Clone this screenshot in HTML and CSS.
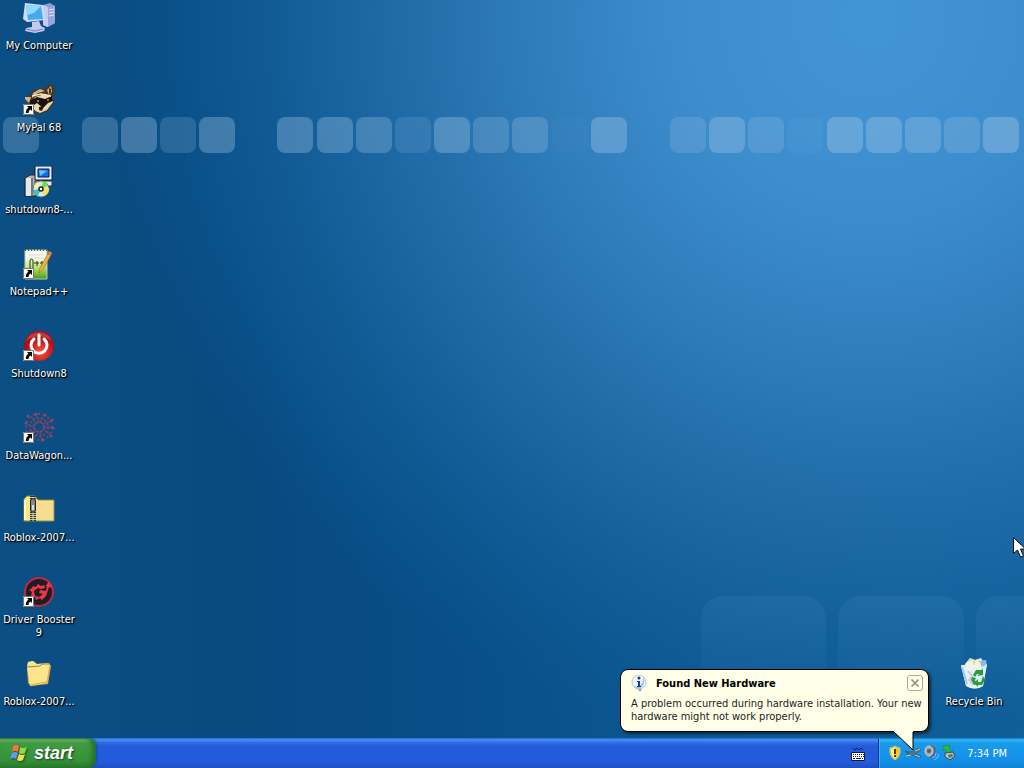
FILE: index.html
```html
<!DOCTYPE html>
<html lang="en">
<head>
<meta charset="utf-8">
<title>Desktop</title>
<link rel="stylesheet" href="styles.css">
</head>
<body>
<svg class="wallpaper" viewBox="0 0 1024 768" preserveAspectRatio="xMidYMid slice" aria-hidden="true">
  <defs>
    <radialGradient id="glow" gradientUnits="userSpaceOnUse" cx="0" cy="0" r="1" gradientTransform="translate(870 20) scale(760 760)">
      <stop offset="0" stop-color="#4295d5"/>
      <stop offset=".25" stop-color="#3d8dcd"/>
      <stop offset=".48" stop-color="#2f7cba" stop-opacity=".95"/>
      <stop offset=".7" stop-color="#1d6aa7" stop-opacity=".8"/>
      <stop offset=".88" stop-color="#0f5d98" stop-opacity=".5"/>
      <stop offset="1" stop-color="#0b5792" stop-opacity="0"/>
    </radialGradient>
    <linearGradient id="base"><stop offset="0" stop-color="#0b4f85"/><stop offset=".25" stop-color="#084a80"/><stop offset=".45" stop-color="#094e87"/><stop offset=".7" stop-color="#0d5994"/><stop offset="1" stop-color="#10609c"/></linearGradient>
    <linearGradient id="big" x2="0" y2="1"><stop offset="0" stop-color="#6aa5d8" stop-opacity=".12"/><stop offset="1" stop-color="#6aa5d8" stop-opacity="0"/></linearGradient>
  </defs>
  <rect width="1024" height="768" fill="url(#base)"/>
  <rect width="1024" height="768" fill="url(#glow)"/>
  <g fill="#a3c6e4">
    <rect x="3" y="117" width="36" height="36" rx="8" opacity=".28"/>
    <rect x="82" y="117" width="36" height="36" rx="8" opacity=".28"/>
    <rect x="121" y="117" width="36" height="36" rx="8" opacity=".36"/>
    <rect x="160" y="117" width="36" height="36" rx="8" opacity=".2"/>
    <rect x="199" y="117" width="36" height="36" rx="8" opacity=".35"/>
    <rect x="277" y="117" width="36" height="36" rx="8" opacity=".35"/>
    <rect x="317" y="117" width="36" height="36" rx="8" opacity=".34"/>
    <rect x="356" y="117" width="36" height="36" rx="8" opacity=".3"/>
    <rect x="395" y="117" width="36" height="36" rx="8" opacity=".16"/>
    <rect x="434" y="117" width="36" height="36" rx="8" opacity=".36"/>
    <rect x="473" y="117" width="36" height="36" rx="8" opacity=".25"/>
    <rect x="512" y="117" width="36" height="36" rx="8" opacity=".28"/>
    <rect x="552" y="117" width="36" height="36" rx="8" opacity=".03"/>
    <rect x="591" y="117" width="36" height="36" rx="8" opacity=".38"/>
    <rect x="670" y="117" width="36" height="36" rx="8" opacity=".22"/>
    <rect x="709" y="117" width="36" height="36" rx="8" opacity=".36"/>
    <rect x="748" y="117" width="36" height="36" rx="8" opacity=".22"/>
    <rect x="787" y="117" width="36" height="36" rx="8" opacity=".06"/>
    <rect x="827" y="117" width="36" height="36" rx="8" opacity=".4"/>
    <rect x="866" y="117" width="36" height="36" rx="8" opacity=".38"/>
    <rect x="905" y="117" width="36" height="36" rx="8" opacity=".32"/>
    <rect x="944" y="117" width="36" height="36" rx="8" opacity=".25"/>
    <rect x="983" y="117" width="36" height="36" rx="8" opacity=".4"/>
  </g>
  <g fill="url(#big)">
    <rect x="701" y="596" width="125" height="125" rx="22"/>
    <rect x="838" y="596" width="126" height="125" rx="22"/>
    <rect x="976" y="596" width="126" height="125" rx="22"/>
  </g>
</svg>

<svg class="defs" aria-hidden="true">
  <symbol id="shortcut" viewBox="0 0 11 11"><path d="M0 0h11v11H0z" fill="#fff"/><path d="M.5.5h10v10H.5z" fill="none" stroke="#777"/><path d="M4 2h5v5L7.500 5.500C6 6.500 5.500 7.500 5.500 9H3C2.500 7 3.500 5 5.500 3.800Z" fill="#000"/></symbol>
</svg>

<main class="desktop">
  <div class="column">
    <button class="shortcut" type="button">
      <svg class="icon" viewBox="0 0 32 32">
        <path d="m20 3 7-2 5 3v17l-8 4-4-2z" fill="#8d9bd6"/><path d="m20 3 5 2v20l-5-2z" fill="#c3cdf2"/><path d="m25 5 7-1v17l-7 4z" fill="#98a5dd"/><path d="m26 8 5-1m-5 4 5-1m-5 4 5-1" stroke="#dfe5ff"/>
        <path d="m2 1 18 2 2 15-18 2L0 17z" fill="#d3daf5"/><path d="m3 3 15 1 2 13-15 1z" fill="#42a9f2"/><path d="m3 3 15 1-7 7-7 2z" fill="#8fd8ff"/><path d="m9 20 7-1 2 5 4 2-1 3-9 2-10-2 1-3 6-1z" fill="#c3c9ef"/><path d="m3 27 9 2 8-2" fill="none" stroke="#7480bb"/>
      </svg>
      <span class="label">My Computer</span>
    </button>
    <button class="shortcut" type="button">
      <svg class="icon" viewBox="0 0 32 32">
        <path d="m2 13 5-2 3-4 7-3 5 1 4-5 4 1 2 6-2 5 1 6-5 8-8 4-6-1-5-8z" fill="#4e351d"/><path d="m2 13 6 0-2 6-4-4zM10 9l7-4 5 2-7 2-6 5zm14-3 4-4 1 6-3 3z" fill="#d4b685"/><path d="m26 4 2 1v4l-2 1z" fill="#453224"/><path d="m12 13 10-3 7 3 1 5-6 8-7 3-7-3-1-6z" fill="#ecd7ae"/><path d="m7 17 7-4 8 2 7-3 1 5-5 2-5 5-6-5-6 4z" fill="#171310"/><path d="m9 12 9-2 10 2" fill="none" stroke="#f5e5c5" stroke-width="1.500"/><circle cx="15" cy="17" r="1" fill="#cf9447"/><circle cx="25" cy="16" r="1" fill="#cf9447"/><path d="m16 23 5-1-2 5-3-1zM9 23l4 5-3-2z" fill="#251811"/>
        <use href="#shortcut" x="0" y="20" width="11" height="11"/>
      </svg>
      <span class="label">MyPal 68</span>
    </button>
    <button class="shortcut" type="button">
      <svg class="icon" viewBox="0 0 32 32">
        <path d="m2 12 5-3h6v21H2z" fill="#aeb5bc" stroke="#222"/><path d="M3 12h5v18H3z" fill="#e7e9e9"/><path d="M9 12v17" stroke="#777" stroke-width="2"/><path d="M12 0h17v14H12z" fill="#e9eef1" stroke="#101b30"/><path d="M15 3h11v8H15z" fill="#176ddd" stroke="#001579"/><path d="m16 4 8 1-7 5z" fill="#5cc5ff"/><path d="M12 15h17v5H12z" fill="#e4e8e9" stroke="#293239"/>
        <circle cx="18" cy="23" r="8" fill="#d9e9e9" stroke="#67767b"/><path d="m18 23 2-8a8 8 0 0 1 5 5z" fill="#69e53e"/><path d="m18 23 8-1a8 8 0 0 1-5 8z" fill="#f3e45b"/><path d="m18 23-3 7a8 8 0 0 1-5-6z" fill="#39c7bd"/><path d="m18 23-7-3a8 8 0 0 1 4-4z" fill="#f5ed9f"/><circle cx="18" cy="23" r="2" fill="#fff" stroke="#222" stroke-width="1.500"/>
      </svg>
      <span class="label">shutdown8-...</span>
    </button>
    <button class="shortcut" type="button">
      <svg class="icon" viewBox="0 0 32 32">
        <linearGradient id="page" x2="0" y2="1"><stop offset=".3" stop-color="#f7fcec"/><stop offset=".65" stop-color="#b2df59"/><stop offset="1" stop-color="#3d9c21"/></linearGradient>
        <path d="M2 2h22v29H2z" fill="url(#page)" stroke="#bccbb2"/><path d="M2 2h22" stroke="#55654d" stroke-width="2" stroke-dasharray="1 2"/><path d="M5 7h16M5 10h16" stroke="#d5e0d0"/><path d="M7 20v-8q1-2 3 0v8" fill="none" stroke="#26341b"/><path d="M11 15h5m-2-2v5m3-3h4m-2-2v5" stroke="#26341b"/><path d="m26 3 3 2-9 17-4 3 1-5z" fill="#edaf42" stroke="#886224" stroke-width=".500"/><path d="m25 5 3 2" stroke="#cc6f5b" stroke-width="2"/>
        <use href="#shortcut" x="0" y="20" width="11" height="11"/>
      </svg>
      <span class="label">Notepad++</span>
    </button>
    <button class="shortcut" type="button">
      <svg class="icon" viewBox="0 0 32 32">
        <radialGradient id="red" cx=".55" cy=".7"><stop stop-color="#ef5944"/><stop offset=".6" stop-color="#d52423"/><stop offset="1" stop-color="#a71118"/></radialGradient>
        <circle cx="16" cy="16" r="15" fill="url(#red)"/><path d="M3 11A14 14 0 0 1 29 11Q16 2 3 11" fill="#f06a59" opacity=".45"/><path d="M11 9a8 8 0 1 0 10 0M16 5v10" fill="none" stroke="#fff" stroke-width="3" stroke-linecap="round"/>
        <use href="#shortcut" x="0" y="20" width="11" height="11"/>
      </svg>
      <span class="label">Shutdown8</span>
    </button>
    <button class="shortcut" type="button">
      <svg class="icon" viewBox="0 0 32 32">
        <g fill="none" stroke="#9c3f5c" opacity=".85"><circle cx="16" cy="15" r="5" stroke-width="2" stroke-dasharray="3 1"/><circle cx="16" cy="15" r="9" stroke-width="2" stroke-dasharray="2 2"/><circle cx="16" cy="15" r="13" stroke-width="2" stroke-dasharray="2 3"/><path d="m16 10-3-7m3 7 6-6m-2 8 9-4m-8 7h9m-9 3 8 6m-12-4 2 10m-4-9-5 8m2-10-9 2m8-6-9-4m11 1-5-8"/></g>
        <g fill="#874873"><circle cx="5" cy="4" r="1.500"/><circle cx="13" cy="2" r="1.500"/><circle cx="22" cy="3" r="1.500"/><circle cx="29" cy="8" r="1.500"/><circle cx="30" cy="16" r="1.500"/><circle cx="28" cy="24" r="1.500"/><circle cx="20" cy="28" r="1.500"/><circle cx="3" cy="11" r="1.500"/></g>
        <use href="#shortcut" x="0" y="20" width="11" height="11"/>
      </svg>
      <span class="label">DataWagon...</span>
    </button>
    <button class="shortcut" type="button">
      <svg class="icon" viewBox="0 0 32 32">
        <path d="M1 5 4 2h8l3 4h16v21H1z" fill="#f5e888" stroke="#8c8b3f"/><path d="M14 8h16v18H12z" fill="#f4dd91"/><path d="M2 6v20" stroke="#fffbc5" stroke-width="2"/><path d="M7 3h6v24H7z" fill="#c9c694"/><path d="M10 2v25" stroke="#333" stroke-width="6" stroke-dasharray="1 1"/><path d="M10 3v24" stroke="#dedbb0" stroke-width="1"/><rect x="7.500" y="5" width="5" height="13" rx="2" fill="#888" stroke="#222"/><path d="M10 11v5" stroke="#ddd" stroke-width="2"/>
      </svg>
      <span class="label">Roblox-2007...</span>
    </button>
    <button class="shortcut" type="button">
      <svg class="icon" viewBox="0 0 32 32">
        <circle cx="16" cy="16" r="14" fill="#201c25" stroke="#bd2b43" stroke-width="2"/><path d="m10 10 3 1 2-3 3 2 3-1 1 3-4 1-3-1-4 3 1 5 4 1 4-3-4-1 1-3 6 1 1-5-2 1 4-6 3 7-3-1-3 9-4 4-2-2-4 2-1-3-4-1 1-4-3-2 3-2z" fill="#ec3845"/>
        <use href="#shortcut" x="0" y="20" width="11" height="11"/>
      </svg>
      <span class="label">Driver Booster 9</span>
    </button>
    <button class="shortcut" type="button">
      <svg class="icon" viewBox="0 0 32 32">
        <path d="m4 9 1-5 5-1 4 3 12-1 2 3-3 18-17 2-3-3z" fill="#d8ad45"/><path d="m4 9 1-5 5-1 4 3 11-1 2 4z" fill="#f7e596"/><path d="m4 9 13-1 2-2h8l-3 19-17 3z" fill="#fbe58c"/><path d="m4 9 13-1 2-2h8" fill="none" stroke="#9d8235"/><path d="m7 27 17-3 3-17" fill="none" stroke="#d9ad45"/>
      </svg>
      <span class="label">Roblox-2007...</span>
    </button>
  </div>
  <div class="column column-end">
    <button class="shortcut" type="button">
      <svg class="icon" viewBox="0 0 32 32">
        <path d="m3 7 26-1-4 22q-8 5-17 0z" fill="#d4e6f5"/><path d="m7 6 5-6 5 2 6-2 4 6-3 6H9z" fill="#f1f5df"/><path d="m10 3 5-2 1 6m4-4 5 2" fill="none" stroke="#c7d396"/><path d="m22 3 6-1 1 7-5 3z" fill="#8cbcea"/><path d="M3 7q12 8 26-1l-4 22q-8 5-17 0z" fill="#e6f1fb" opacity=".82"/><path d="m4 9 5 17" stroke="#9ccbf0" stroke-width="2"/><path d="m10 13 4 5-3 4 4 5" stroke="#d6c2df" stroke-width="2" fill="none"/>
        <path d="m15 17 3-5h5l2-1v6l-6 1 2-2h-2l-2 3zm10 1 2 4-3 5h-4v2l-4-4 4-4v3h3l1-3zM14 19l4 1-1 2 2 4-3 1-3-5z" fill="#25a137"/>
      </svg>
      <span class="label">Recycle Bin</span>
    </button>
  </div>
</main>

<footer class="taskbar">
  <button class="start" type="button">
    <svg class="flag" viewBox="0 0 18 18" aria-hidden="true"><path d="M3 2q4-2 6 0L8 8Q5 6 2 8z" fill="#f4743b"/><path d="M10 3q3 2 7 0l-2 6q-3 2-6 0z" fill="#8cdb43"/><path d="M2 9q3-2 6 0l-2 6q-3-2-6 0z" fill="#5c9bf5"/><path d="M9 10q3 2 6 0l-2 6q-3 2-6 0z" fill="#ffdb42"/></svg>
    <span>start</span>
  </button>
  <button class="keyboard" type="button" aria-label="Keyboard">
    <svg viewBox="0 0 14 14"><path d="m2 1 2 2 2-2 2 2 2-2 2 2" fill="none" stroke="#101f68"/><path d="M.5 5.500h13v8H.5z" fill="#fff" stroke="#111c46"/><path d="M2 7.500h11M2 9.500h11" stroke="#111c46" stroke-dasharray="1 1"/><path d="M2 11.500h2m1 0h5m1 0h1" stroke="#111c46"/></svg>
  </button>
  <div class="tray">
    <svg class="tray-icon" viewBox="0 0 16 16"><path d="M8 1q3 2 5 2v5q-1 5-5 7-4-2-5-7V3q2 0 5-2" fill="#f9c92d" stroke="#c9c28a"/><path d="M8 2v12q-3-3-4-6V4z" fill="#fff16a"/><path d="M8 4v5m0 1v2" stroke="#4b3907" stroke-width="2"/></svg>
    <svg class="tray-icon" viewBox="0 0 16 16"><path d="m0 6 6 1 8-4 2 2-6 4 6 2-1 2-8-3-5 1-1-2 4-1-5-1z" fill="#567483" stroke="#344f60" stroke-width=".500"/><path d="m10 6 5-2m-5 6 5 2M1 11l5-1" stroke="#b8cdd0"/></svg>
    <svg class="tray-icon" viewBox="0 0 16 16"><path d="m1 5 3-4 5-1 4 4-1 7-4 2-5-3z" fill="#54677b"/><ellipse cx="6" cy="6" rx="4" ry="5" fill="#9caab2" stroke="#d3dadc"/><circle cx="6" cy="6" r="2" fill="#4e5d71"/><path d="M9 13q4-1 4-5m-2 7q4-1 5-6" fill="none" stroke="#8ab9ff"/></svg>
    <svg class="tray-icon" viewBox="0 0 16 16"><path d="m4 8 8-1 2 4-5 4-5-3z" fill="#b7c2b9" stroke="#36484d"/><path d="m7 10 4-1 1 2-4 2z" fill="#5c6a6c"/><path d="m2 1 7-1-1 3 2 3-3 2-3-4-2 2z" fill="#31ba3c" stroke="#087b2e" stroke-width=".500"/></svg>
    <time class="clock" datetime="19:34">7:34 PM</time>
    <section class="balloon" role="status">
      <header class="balloon-head">
        <svg class="info" viewBox="0 0 17 17" aria-hidden="true"><path d="m6 12 3 4 2-4" fill="#dfeafa" stroke="#5f7ba8"/><circle cx="8" cy="7" r="7" fill="#eef5ff" stroke="#b5c7e0"/><path d="M12 2q4 6-3 12-4 0-6-2 10 0 9-10" fill="#a6c3ec"/><circle cx="8" cy="3" r="1.500" fill="#173d91"/><path d="M6 6h3v5h1v1H6v-1h1V7H6z" fill="#173d91"/></svg>
        <h1 class="balloon-title">Found New Hardware</h1>
        <button class="close" type="button" aria-label="Close"><svg viewBox="0 0 16 16"><path d="m4 4 8 8m0-8-8 8" stroke="#969386" stroke-width="2"/></svg></button>
      </header>
      <p class="balloon-text">A problem occurred during hardware installation. Your new hardware might not work properly.</p>
      <svg class="tail" viewBox="0 0 22 20" aria-hidden="true"><path d="M0 0v1l19 18V0z" fill="#ffffe8"/><path d="M0 1l19 18V1" fill="none" stroke="#000"/></svg>
    </section>
  </div>
</footer>
<svg class="cursor" viewBox="0 0 13 21" aria-hidden="true"><path d="M.5.5v16l4-3.500 3 7 3-1-3-7h5z" fill="#fff" stroke="#111"/></svg>
</body>
</html>
```
FILE: styles.css
```css
* { box-sizing: border-box; }
body {
  margin: 0;
  min-height: 100vh;
  display: flex;
  flex-direction: column;
  position: relative;
  overflow: hidden;
  background: #0b5390;
  color: #000;
  font: 11px/13px "DejaVu Sans Condensed", "Noto Sans", sans-serif;
}
button { margin: 0; padding: 0; border: 0; background: none; color: inherit; font: inherit; }
svg { display: block; }
.wallpaper { position: absolute; inset: 0; width: 100%; height: 100%; z-index: -1; }
.defs { position: absolute; width: 0; height: 0; }

.desktop { flex: 1; display: flex; justify-content: space-between; }
.column { display: flex; flex-direction: column; width: 78px; }
.column-end { justify-content: flex-end; margin-right: 11px; }
.shortcut {
  height: 82px;
  padding-top: 2px;
  display: flex;
  flex-direction: column;
  align-items: center;
  gap: 5px;
  color: #fff;
  text-align: center;
}
.icon { width: 32px; height: 32px; flex: none; }
.label { max-width: 76px; text-shadow: 1px 1px 1px #000, 1px 1px 2px #000; }

.taskbar {
  height: 30px;
  display: flex;
  align-items: stretch;
  background: linear-gradient(#2868d5 0, #4a91f5 2px, #3272e6 4px, #245bda 8px, #245bdb 24px, #1e4fc0 100%);
}
.start {
  width: 96px;
  padding-left: 10px;
  display: flex;
  align-items: center;
  gap: 6px;
  border-radius: 0 8px 8px 0;
  background: linear-gradient(#397e39 0, #70b96d 2px, #429b43 5px, #359237 22px, #287b2b 100%);
  box-shadow: inset -4px 0 5px #246f2d, 1px 0 2px #174aa8;
  color: #fff;
  font: italic bold 18px/24px "Liberation Sans", Arial, sans-serif;
  text-shadow: 1px 1px 2px #183b1d;
}
.flag { width: 18px; height: 18px; filter: drop-shadow(1px 1px 1px #174b24); }
.keyboard { margin-left: auto; margin-right: 13px; padding-top: 2px; }
.keyboard svg { width: 14px; height: 14px; }
.tray {
  position: relative;
  width: 146px;
  padding: 0 17px 0 8px;
  display: flex;
  align-items: center;
  gap: 2px;
  border-left: 1px solid #093d9b;
  background: linear-gradient(#1679cb 0, #35b6f5 2px, #199bea 5px, #1290e8 22px, #1281d3 100%);
  box-shadow: inset 1px 0 #36b4f5;
}
.tray-icon { width: 16px; height: 16px; flex: none; }
.clock { margin-left: auto; color: #fff; white-space: nowrap; }
.balloon {
  position: absolute;
  right: 95px;
  bottom: 36px;
  width: 309px;
  padding: 4px 5px 8px 10px;
  border: 1px solid #000;
  border-radius: 8px;
  background: #ffffe8;
  box-shadow: 2px 2px 3px #0008;
}
.balloon-head { display: flex; align-items: center; gap: 8px; height: 18px; }
.info { width: 17px; height: 17px; }
.balloon-title { margin: 0; font-size: 11px; line-height: 13px; }
.close { width: 16px; height: 16px; margin-left: auto; border: 1px solid #aaa99b; border-radius: 3px; }
.close svg { width: 14px; height: 14px; }
.balloon-text { margin: 5px 0 0; color: #222; }
.tail { position: absolute; right: 12px; top: 100%; width: 22px; height: 20px; }
.cursor { position: absolute; top: 537px; left: 1013px; width: 13px; height: 21px; }
```
